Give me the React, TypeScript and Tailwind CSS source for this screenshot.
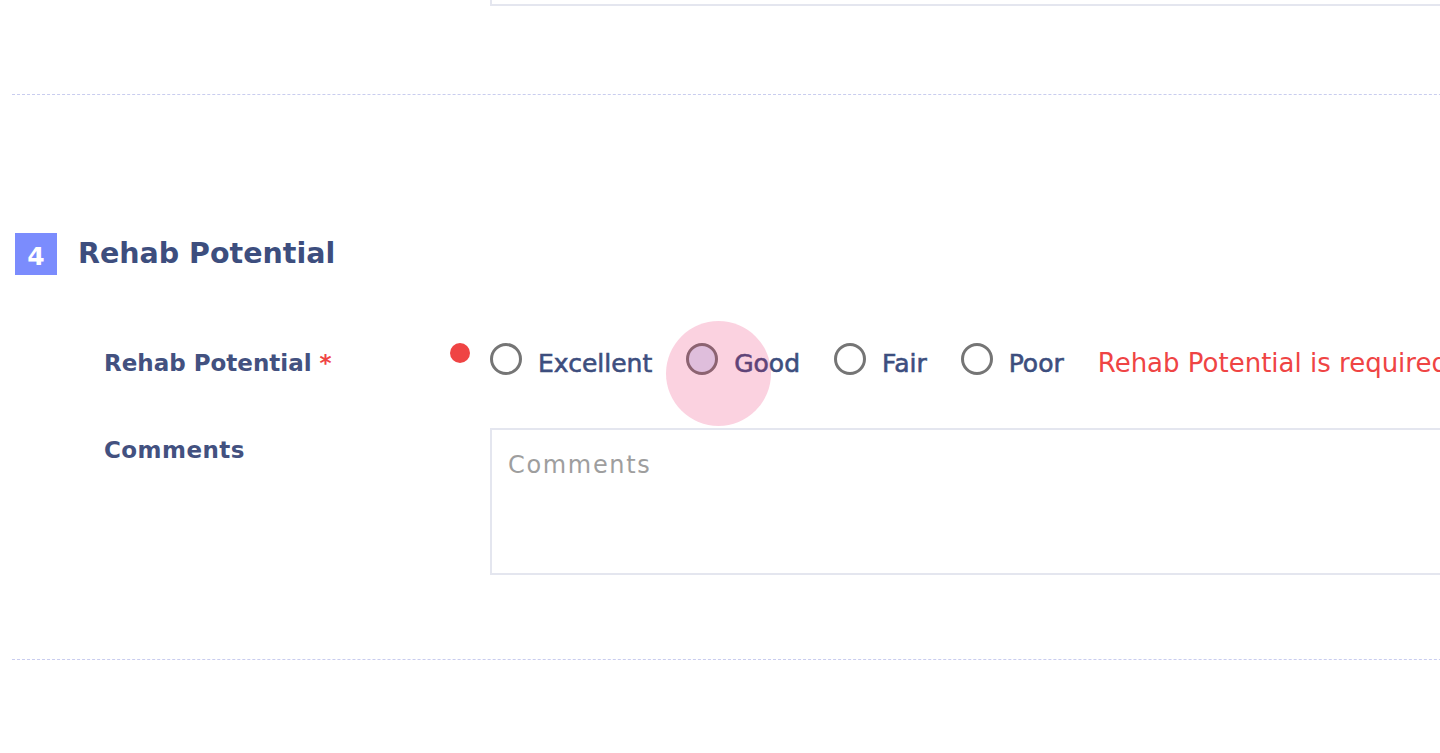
import React from "react";

const font = { fontFamily: "'DejaVu Sans', Inter, sans-serif" };

function RadioOption({ label, hovered }: { label: string; hovered?: boolean }) {
  return (
    <div className="flex items-center gap-[16px] relative">
      <div
        className={`w-[32px] h-[32px] shrink-0 rounded-full border-[3px] border-[#757575] ${
          hovered ? "bg-[#dde6fb]" : "bg-white"
        }`}
      />
      <span className="mt-[8px] text-[25px] text-[#3d4e7e] leading-none [-webkit-text-stroke:0.6px]">{label}</span>
      {hovered && (
        <div className="absolute left-[-20px] top-[-22px] w-[105px] h-[105px] rounded-full bg-[#e91e63]/20 pointer-events-none" />
      )}
    </div>
  );
}

export default function App() {
  return (
    <div className="w-[1440px] h-[753px] overflow-hidden bg-white relative" style={font}>
      <div className="ml-[490px] h-[6px] w-[1100px] border-l-2 border-b-2 border-[#e4e6ef]" />
      <div className="mt-[88px] ml-[12px] w-[1500px] border-t border-dashed border-[#c9cdef]" />

      <div className="mt-[138px] pl-[15px] flex items-center gap-[21px] h-[42px]">
        <div className="w-[42px] h-[42px] shrink-0 bg-[#7b8cfd] flex items-center justify-center text-white text-[25px] font-bold leading-none pt-[4px]">
          4
        </div>
        <h2 className="text-[28.5px] font-bold text-[#3d4e7e] leading-none whitespace-nowrap">Rehab Potential</h2>
      </div>

      <div className="mt-[68px] flex h-[32px] whitespace-nowrap">
        <div className="w-[450px] shrink-0 pl-[104px] flex items-center pt-[8px]">
          <span className="text-[23px] font-bold text-[#435180] leading-none">
            Rehab Potential <span className="text-[#ef4444]">*</span>
          </span>
        </div>
        <div className="w-[20px] h-[20px] shrink-0 rounded-full bg-[#ef4444]" />
        <div className="ml-[20px] flex items-center gap-[34px] shrink-0">
          <RadioOption label="Excellent" />
          <RadioOption label="Good" hovered />
          <RadioOption label="Fair" />
          <RadioOption label="Poor" />
          <span className="mt-[7px] text-[26px] text-[#ef4444] leading-none">Rehab Potential is required</span>
        </div>
      </div>

      <div className="mt-[53px] flex">
        <div className="w-[490px] shrink-0 pl-[104px] pt-[11px]">
          <span className="text-[23px] font-bold text-[#435180] leading-none tracking-[0.02em]">Comments</span>
        </div>
        <div className="w-[1100px] shrink-0 h-[147px] border-2 border-[#e4e6ef] px-[16px] pt-[23px]">
          <span className="text-[24px] tracking-[0.07em] text-[#9e9e9e] leading-none">Comments</span>
        </div>
      </div>

      <div className="mt-[84px] ml-[12px] w-[1500px] border-t border-dashed border-[#c9cdef]" />
    </div>
  );
}
